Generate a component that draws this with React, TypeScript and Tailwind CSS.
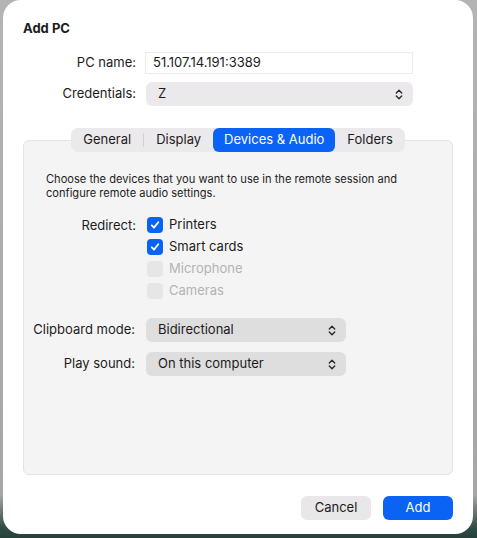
import type { ReactNode } from "react";

const font = { fontFamily: 'Inter, "Noto Sans", "Liberation Sans", sans-serif' } as const;

function Chevrons() {
  return (
    <svg width="8" height="11" viewBox="0 0 8 11" fill="none" stroke="#2a2a2a" strokeWidth="1.4" strokeLinecap="round" strokeLinejoin="round">
      <path d="M1.3 4 4 1.3 6.7 4" />
      <path d="M1.3 7 4 9.7 6.7 7" />
    </svg>
  );
}

function Select({ value, className }: { value: string; className: string }) {
  return (
    <div className={`flex h-6 items-center justify-between rounded-[6px] pl-3 pr-[10px] text-[13px] text-[#1c1c1c] ${className}`}>
      <span>{value}</span>
      <Chevrons />
    </div>
  );
}

function Check({ label, checked, disabled }: { label: string; checked?: boolean; disabled?: boolean }) {
  return (
    <div className="flex h-[22px] items-center gap-[6px]">
      {checked ? (
        <span className="flex h-4 w-4 items-center justify-center rounded-[4px] bg-[#0b63f6]">
          <svg width="10" height="10" viewBox="0 0 10 10" fill="none" stroke="white" strokeWidth="1.8" strokeLinecap="round" strokeLinejoin="round">
            <path d="M1.8 5.3 4 7.6 8.3 2.3" />
          </svg>
        </span>
      ) : (
        <span className="h-4 w-4 rounded-[4px] bg-[#e7e6e7]" />
      )}
      <span className={`text-[13px] ${disabled ? "text-[#b3b3b3]" : "text-[#1c1c1c]"}`}>{label}</span>
    </div>
  );
}

function Row({ label, children, className = "" }: { label: string; children: ReactNode; className?: string }) {
  return (
    <div className={`flex items-start ${className}`}>
      <div className="w-[112px] shrink-0 text-right text-[13px] leading-[22px] text-[#1c1c1c]">{label}</div>
      <div className="ml-[11px]">{children}</div>
    </div>
  );
}

const tabs = ["General", "Display", "Devices & Audio", "Folders"];

export default function App() {
  return (
    <div
      className="h-[538px] w-[477px] overflow-hidden bg-[linear-gradient(to_bottom,#b4b4b4_0%,#a6a6a6_92%,#314c46_98%,#27403b_100%)] pl-[3px]"
      style={font}
    >
      <div className="flex h-[534px] w-[470px] flex-col rounded-[18px] bg-white px-5 pt-5 text-[#1c1c1c]">
        <h1 className="text-[13px] font-bold leading-4">Add PC</h1>

        {/* top fields */}
        <div className="mt-4 flex flex-col gap-2">
          <div className="flex items-center">
            <div className="w-[113px] text-right text-[13px]">PC name:</div>
            <div className="ml-[9px] flex h-[22px] w-[268px] items-center border border-[#ebebeb] px-[7px] text-[13px]">
              51.107.14.191:3389
            </div>
          </div>
          <div className="flex items-center">
            <div className="w-[113px] text-right text-[13px]">Credentials:</div>
            <Select value="Z" className="ml-[10px] w-[267px] bg-[#ece9ec] pl-3" />
          </div>
        </div>

        {/* tabs + panel */}
        <div className="mt-[22px] flex flex-col">
          <div className="z-10 mx-auto flex h-6 items-center rounded-[7px] bg-[#ebe9eb] text-[13px]">
            {tabs.map((t, i) => (
              <div key={t} className="flex items-center">
                {i === 1 && <span className="h-[14px] w-px bg-[#d2d0d2]" />}
                <span
                  className={`flex h-6 items-center rounded-[6px] ${
                    t === "Devices & Audio" ? "bg-[#0b63f6] px-[11px] text-white" : "px-3 text-[#1c1c1c]"
                  }`}
                >
                  {t}
                </span>
              </div>
            ))}
          </div>
          <div className="-mt-3 h-[335px] rounded-[6px] border border-[#e4e3e4] bg-[#f5f4f5] pt-[31px]">
            <p className="pl-[22px] text-[11.1px] leading-[14px] text-[#1c1c1c]">
              Choose the devices that you want to use in the remote session and
              <br />
              configure remote audio settings.
            </p>

            <Row label="Redirect:" className="mt-[14px]">
              <Check label="Printers" checked />
              <Check label="Smart cards" checked />
              <Check label="Microphone" disabled />
              <Check label="Cameras" disabled />
            </Row>

            <div className="mt-[16px] flex flex-col gap-[10px]">
              <div className="flex items-center">
                <div className="w-[111px] text-right text-[13px]">Clipboard mode:</div>
                <Select value="Bidirectional" className="ml-[11px] w-[200px] bg-[#dfdedf]" />
              </div>
              <div className="flex items-center">
                <div className="w-[111px] text-right text-[13px]">Play sound:</div>
                <Select value="On this computer" className="ml-[11px] w-[200px] bg-[#dfdedf]" />
              </div>
            </div>
          </div>
        </div>

        {/* buttons */}
        <div className="mt-[21px] flex justify-end gap-3">
          <button className="h-6 w-[70px] rounded-[6px] bg-[#e9e7e9] text-[13px] text-[#1c1c1c]">Cancel</button>
          <button className="h-6 w-[70px] rounded-[6px] bg-[#0b63f6] text-[13px] text-white">Add</button>
        </div>
      </div>
    </div>
  );
}
